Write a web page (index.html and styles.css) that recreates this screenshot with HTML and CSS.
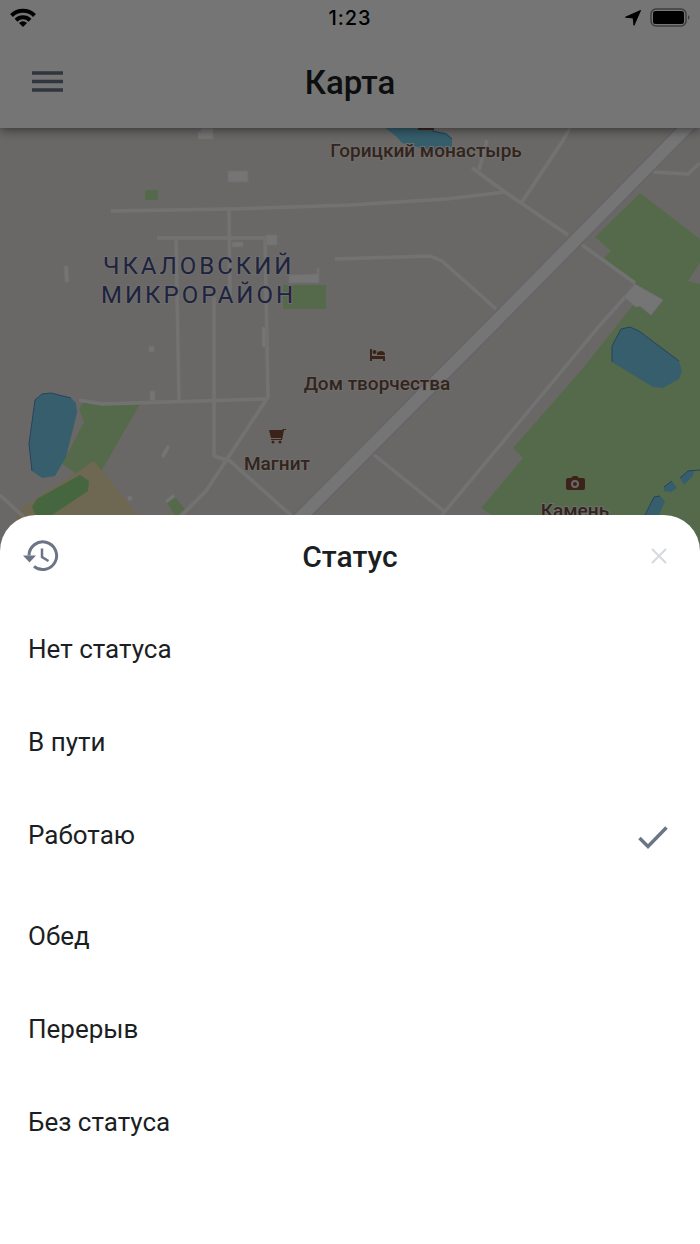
FILE: index.html
```html
<!DOCTYPE html>
<html lang="ru">
<head>
  <meta charset="UTF-8">
  <title>Карта</title>
  <meta name="viewport" content="width=device-width, initial-scale=1">
  <link rel="stylesheet" href="styles.css">
</head>
<body>
  <div class="screen">
    <div class="statusbar">
      <svg class="wifi" width="26" height="20" viewBox="0 0 26 20">
        <g fill="none" stroke="#000" stroke-width="4">
          <path d="M1.5 7.5a16.3 16.3 0 0 1 23 0"/>
          <path d="M6 12.2a10 10 0 0 1 14 0"/>
        </g>
        <path d="M13 19l-4-4a5.6 5.6 0 0 1 8 0z"/>
      </svg>
      <time class="clock">1:23</time>
      <div class="statusbar-right">
        <svg width="16" height="16" viewBox="0 0 16 16"><path d="M15.5.5L9 15.3 8.2 8 .5 7.2z" stroke="#000" stroke-linejoin="round"/></svg>
        <svg width="42" height="20" viewBox="0 0 42 20">
          <rect x="1" y="1" width="35" height="17" rx="5" fill="none" stroke="#888" stroke-width="1.500"/>
          <rect x="3" y="3" width="31" height="13" rx="2.500"/>
          <path d="M38 7q3 2.500 0 5z" fill="#888"/>
        </svg>
      </div>
    </div>

    <header class="topbar">
      <button class="icon-btn" aria-label="Меню">
        <svg width="31" height="22" viewBox="0 0 31 22"><path d="M0 2h31M0 10.500h31M0 19h31" stroke="#6b7585" stroke-width="3.500"/></svg>
      </button>
      <h1>Карта</h1>
    </header>

    <main class="map">
      <svg class="map-canvas" viewBox="0 128 700 432" preserveAspectRatio="xMidYMin slice">
        <!-- зелень -->
        <g fill="#b7e7a1">
          <path d="M640 193L700 239V560H560L481 508L523 458L513 448L583 368L633 305L640 300L636 284L604 258L611 251L595 237z"/>
          <path d="M83 403L140 404L102 470L90 483L62 464L84 422L79 409z"/>
          <path d="M283 285H326V309H283z"/>
          <rect x="145" y="190" width="13" height="10" rx="1"/>
          <path d="M167 503L175 497L185 509L176 517z"/>
        </g>
        <path d="M688 281L700 263V284z" fill="#e7e3de"/>
        <path d="M94 461L140 517V560H0L20 509z" fill="#f0e0b0"/>
        <path d="M80 475L89 481L88 491L49 517L36 516L32 507L37 499z" fill="#98de8b"/>

        <!-- вода -->
        <g fill="#76cdeb">
          <path d="M35 400L42 394L51 393L71 398L76 403L77 413L66 457L55 476L42 478L32 471L29 444z"/>
          <path d="M612 346L621 329L630 327L639 331L679 361L682 371L679 379L663 388L653 387L612 362z"/>
          <path d="M385 128Q397 136 402 143Q425 150 445 151L452 146V138L446 133L432 130V120H385z"/>
          <path d="M644 517L654 497L660 496L665 501L658 517z"/>
          <path d="M664 487L672 481L677 488L671 492L664 491z"/>
          <path d="M680 478L688 471L694 470L693 476L684 485z"/>
        </g>
        <g fill="none" stroke="#5490d0">
          <path d="M32 471L29 444L35 400L42 394L51 393L71 398"/>
          <path d="M612 362V346L621 329L630 327L639 331L679 361"/>
          <path d="M644 517L654 497L660 496M664 487L672 481M680 478L688 471L700 470M432 131L446 134L452 139"/>
        </g>

        <!-- улицы -->
        <g class="streets">
          <path d="M111 211L230 209L350 205L446 199L505 192"/>
          <path d="M157 238H265L268 397L206 491L175 522"/>
          <path d="M176 238L179 400"/>
          <path d="M229 209L230 297M214 297V456L230 461L292 516"/>
          <path d="M79 400L102 404L265 399"/>
          <path d="M335 259L430 256L442 261L496 309"/>
          <path d="M487 140L479 170M472 168L505 192L568 235M582 245L635 283"/>
          <path d="M570 128L562 142L522 202"/>
          <path d="M636 285L600 325L442 515"/>
          <path d="M373 454L445 512"/>
          <path d="M653 172L688 174L700 163"/>
          <path d="M0 495L26 519"/>
        </g>
        <path d="M710 104L686 128L497 320L283 535" fill="none" stroke="#d9d9e8" stroke-width="15"/>
        <path d="M710 104L686 128L497 320L283 535" fill="none" stroke="#fff" stroke-width="12"/>

        <!-- дома -->
        <g class="houses">
          <path d="M198 132H201V128H213V139H198z"/>
          <path d="M228 171h20v11h-20z"/>
          <path d="M266 235h11v10h-11z"/>
          <path d="M232 242h11v5h-11z"/>
          <path d="M289 275L317 274V268H319V283H289z"/>
          <path d="M64 266h4l1 16h-4z"/>
          <path d="M149 346h5v6h-5z"/>
          <path d="M150 391h5v10h-5z"/>
          <path d="M262 327h4v20h-4z"/>
          <path d="M167 445l3 2-6 11-3-2z"/>
          <path d="M127 498l3-3 3 4-4 2z"/>
          <path d="M165 501l8-7 2 3-8 6z"/>
          <path d="M635 284L663 300L651 315L640 306L636 307L624 297z"/>
        </g>

        <text class="district" x="103" y="274">ЧКАЛОВСКИЙ</text>
        <text class="district" x="101" y="303">МИКРОРАЙОН</text>

        <g class="poi">
          <text x="426" y="157">Горицкий монастырь</text>
          <text x="377" y="390">Дом творчества</text>
          <text x="277" y="470">Магнит</text>
          <text x="575" y="517">Камень</text>
        </g>
        <g fill="#814e39">
          <path d="M418 128h16v2h-16z"/>
          <path d="M370 349h2v7h13v5h-2v-2h-11v2h-2z"/>
          <circle cx="374.500" cy="352" r="2"/>
          <path d="M377 355v-2q1-2 4-2q4 0 4 4z"/>
          <path d="M269 430h13l1-1h3v1h-2l-2 10h-11v-1h10v-1h-10z"/>
          <circle cx="273" cy="442" r="1.500"/>
          <circle cx="280" cy="442" r="1.500"/>
          <path d="M568 478h3l2-2h4l2 2h4q2 0 2 2v8q0 2-2 2h-15q-2 0-2-2v-8q0-2 2-2z"/>
        </g>
        <circle cx="575" cy="484" r="3" fill="none" stroke="#e7e3de" stroke-width="2"/>
      </svg>
    </main>

    <div class="overlay"></div>

    <section class="sheet" aria-labelledby="sheet-title">
      <div class="sheet-header">
        <button class="icon-btn" aria-label="История">
          <svg width="36" height="32" viewBox="0 0 36 32">
            <path d="M6 15.500A13.800 13.800 0 1 1 11 26.300" fill="none" stroke="#6b7585" stroke-width="3"/>
            <path d="M0 15.500h13l-6.500 7z" fill="#6b7585"/>
            <path d="M19 8.500v8.500l6.500 4" fill="none" stroke="#6b7585" stroke-width="2.500"/>
          </svg>
        </button>
        <h2 id="sheet-title">Статус</h2>
        <button class="icon-btn close" aria-label="Закрыть">
          <svg width="16" height="16" viewBox="0 0 16 16"><path d="M1 1l14 14M15 1L1 15" stroke="#d6d9dd" stroke-width="2"/></svg>
        </button>
      </div>
      <div class="status-list">
        <button class="status">Нет статуса</button>
        <button class="status">В пути</button>
        <button class="status" aria-pressed="true">Работаю
          <svg width="30" height="41" viewBox="0 0 30 41"><path d="M1.500 19l8.500 8.500L28.500 8.500" fill="none" stroke="#6b7585" stroke-width="3.500"/></svg>
        </button>
        <button class="status">Обед</button>
        <button class="status">Перерыв</button>
        <button class="status">Без статуса</button>
      </div>
    </section>
  </div>
</body>
</html>
```
FILE: styles.css
```css
* {
  box-sizing: border-box;
}
body {
  margin: 0;
  font-family: Roboto, sans-serif;
  color: #1b1f23;
}
h1, h2 {
  margin: 0;
  font-weight: 500;
}
svg {
  display: block;
}
.screen {
  position: relative;
  min-height: 100vh;
  display: flex;
  flex-direction: column;
}
.statusbar {
  position: relative;
  z-index: 2;
  display: grid;
  grid-template-columns: 1fr auto 1fr;
  align-items: center;
  height: 36px;
  padding: 0 8px;
  background: #fff;
}
.wifi {
  margin-left: 2px;
}
.clock {
  font: 500 20px Inter, sans-serif;
  letter-spacing: 1px;
  color: #000;
}
.statusbar-right {
  display: flex;
  align-items: center;
  justify-content: flex-end;
  gap: 9px;
}
.topbar {
  position: relative;
  z-index: 1;
  display: grid;
  grid-template-columns: 1fr auto 1fr;
  align-items: center;
  height: 92px;
  padding: 0 32px;
  background: #fff;
  box-shadow: 0 2px 10px rgba(0, 0, 0, 0.5);
}
.topbar h1 {
  font-size: 33px;
}
.icon-btn {
  justify-self: start;
  padding: 0;
  border: none;
  background: none;
  cursor: pointer;
}
.map {
  flex: 1;
  min-height: 200px;
  display: flex;
  background: #e7e3de;
}
.map-canvas {
  width: 100%;
  height: 100%;
}
.streets {
  fill: none;
  stroke: #f9f9f9;
  stroke-width: 3.5;
  stroke-linejoin: round;
}
.houses {
  fill: #fff;
  stroke: #eeeff4;
}
.district {
  font-size: 24px;
  letter-spacing: 3px;
  fill: #434e8c;
  stroke: #f1eeeb;
  stroke-width: 2px;
  paint-order: stroke;
}
.poi text {
  font-size: 19px;
  font-weight: 500;
  text-anchor: middle;
  fill: #6f5043;
  stroke: #f1eeeb;
  stroke-width: 2px;
  paint-order: stroke;
}
.overlay {
  position: absolute;
  inset: 0;
  z-index: 2;
  background: rgba(0, 0, 0, 0.54);
}
.sheet {
  position: relative;
  z-index: 3;
  margin-top: -45px;
  padding-bottom: 75px;
  background: #fff;
  border-radius: 36px 36px 0 0;
}
.sheet-header {
  display: grid;
  grid-template-columns: 1fr auto 1fr;
  align-items: center;
  height: 82px;
  padding: 0 23px;
}
.sheet-header h2 {
  font-size: 30px;
}
.close {
  justify-self: end;
  margin-right: 10px;
}
.status-list {
  padding-top: 6px;
}
.status {
  display: flex;
  align-items: flex-start;
  justify-content: space-between;
  width: 100%;
  padding: 30px 32px 30px 28px;
  border: none;
  background: none;
  color: inherit;
  font: 26px/33px Roboto, sans-serif;
  text-align: left;
  cursor: pointer;
}
```
